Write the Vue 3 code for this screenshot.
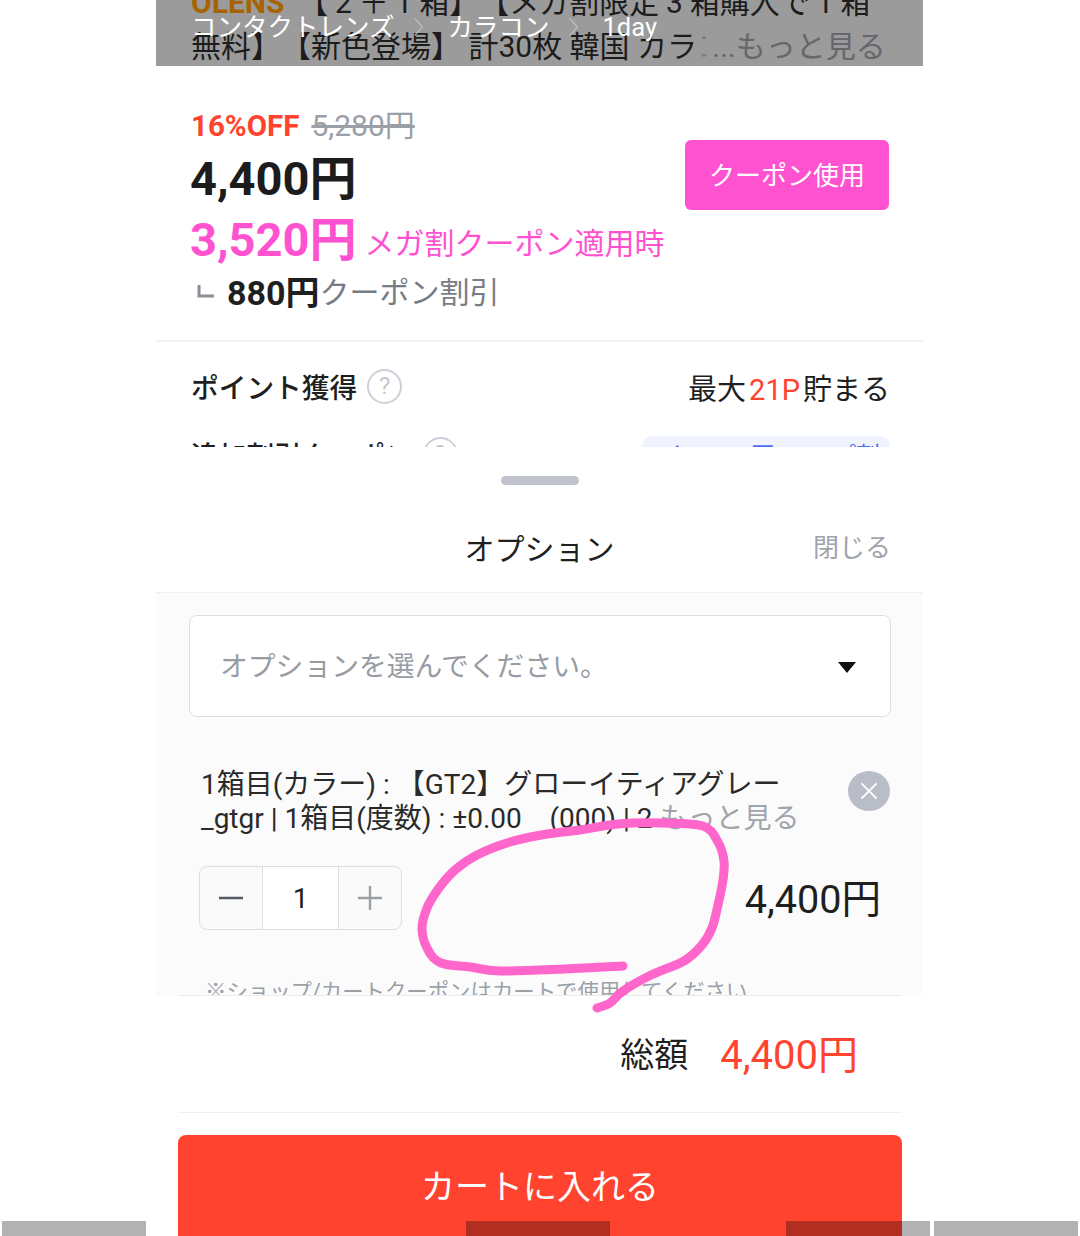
<script setup>
const points = [
  [623, 966], [565, 969], [500, 971], [470, 967], [441, 963], [428, 950], [422, 929], [427, 908],
  [439, 888], [455, 870], [477, 855], [510, 842], [547, 834], [580, 830], [618, 824], [660, 823],
  [703, 826], [718, 842], [724, 861], [723, 880], [718, 905], [712, 928], [702, 945], [684, 961],
  [651, 975], [623, 991], [610, 1003], [597, 1008],
];
function smooth(pts) {
  let d = `M${pts[0][0]} ${pts[0][1]}`;
  for (let i = 0; i < pts.length - 1; i++) {
    const p0 = pts[Math.max(i - 1, 0)];
    const p1 = pts[i];
    const p2 = pts[i + 1];
    const p3 = pts[Math.min(i + 2, pts.length - 1)];
    const c1x = p1[0] + (p2[0] - p0[0]) / 6;
    const c1y = p1[1] + (p2[1] - p0[1]) / 6;
    const c2x = p2[0] - (p3[0] - p1[0]) / 6;
    const c2y = p2[1] - (p3[1] - p1[1]) / 6;
    d += ` C${c1x} ${c1y} ${c2x} ${c2y} ${p2[0]} ${p2[1]}`;
  }
  return d;
}
const strokePath = smooth(points);
const bars = [
  { id: 1, left: "2px" },
  { id: 2, left: "466px" },
  { id: 3, left: "786px" },
  { id: 4, left: "934px" },
];
</script>

<template>
  <div class="screen">
    <main class="phone">
      <header class="hero">
        <div class="title">
          <p class="line first"><b class="brand">OLENS</b><span class="tight">&nbsp;&nbsp;【 2 ＋ 1 箱】【メガ割限定 3 箱購入で 1 箱</span></p>
          <p class="line second"><span>無料】【新色登場】 計30枚 韓国 カラ</span><span class="fade">コ</span><span class="more">...もっと見る</span></p>
        </div>
        <nav class="crumbs">
          <span>コンタクトレンズ</span>
          <svg class="chev" viewBox="0 0 14 26"><path d="M2 2 L12 13 L2 24" /></svg>
          <span>カラコン</span>
          <svg class="chev" viewBox="0 0 14 26"><path d="M2 2 L12 13 L2 24" /></svg>
          <span>1day</span>
        </nav>
      </header>

      <section class="prices">
        <div class="price-col">
          <div class="discount"><b>16%OFF</b><s>5,280円</s></div>
          <div class="big">4,400円</div>
          <div class="mega"><b>3,520円</b><span>メガ割クーポン適用時</span></div>
          <div class="coupon">
            <svg class="corner" viewBox="0 0 18 14"><path d="M2 1 V12 H17" /></svg>
            <b>880円</b><span>クーポン割引</span>
          </div>
        </div>
        <button class="coupon-btn">クーポン使用</button>
      </section>

      <section class="info">
        <div class="info-row">
          <div class="info-label">ポイント獲得<span class="q">?</span></div>
          <div class="info-value">最大<em>21P</em>貯まる</div>
        </div>
        <div class="info-row second-row">
          <div class="info-label">追加割引クーポン<span class="q">?</span></div>
          <div class="pill"><span>く 1,000円 &gt;</span><span>プ割</span></div>
        </div>
      </section>

      <section class="sheet">
        <div class="handle"></div>
        <div class="sheet-head">
          <h2>オプション</h2>
          <span class="close-text">閉じる</span>
        </div>
        <div class="sheet-body">
          <div class="select">
            <span class="placeholder">オプションを選んでください。</span>
            <i class="caret"></i>
          </div>
          <div class="option">
            <div class="option-top">
              <p class="option-text">1箱目(カラー) : 【GT2】グローイティアグレー<br />_gtgr | 1箱目(度数) : ±0.00 &nbsp;&nbsp; (000) | 2 <span class="more-light">もっと見る</span></p>
              <svg class="remove" viewBox="0 0 44 44">
                <ellipse cx="22" cy="21" rx="22" ry="21" fill="#b9bdc7" />
                <path d="M14 13 L30 29 M30 13 L14 29" stroke="#fff" stroke-width="2" />
              </svg>
            </div>
            <div class="option-bottom">
              <div class="stepper">
                <div class="step">
                  <svg viewBox="0 0 24 24"><path d="M0 12 H24" stroke="#555a63" stroke-width="2.4" /></svg>
                </div>
                <div class="count">1</div>
                <div class="step">
                  <svg viewBox="0 0 24 24"><path d="M0 12 H24 M12 0 V24" stroke="#9a9fa8" stroke-width="2.4" /></svg>
                </div>
              </div>
              <div class="option-price">4,400円</div>
            </div>
            <p class="note">※ショップ/カートクーポンはカートで使用してください</p>
          </div>
        </div>
        <div class="total-wrap">
          <div class="total"><span>総額</span><b>4,400円</b></div>
          <button class="cart">カートに入れる</button>
        </div>
      </section>
    </main>

    <svg class="scribble" viewBox="0 0 1080 1236"><path :d="strokePath" /></svg>
    <i v-for="bar in bars" :key="bar.id" class="nav-bar" :style="{ left: bar.left }"></i>
  </div>
</template>

<style>
html, body { margin: 0; background: #fff; }
</style>

<style scoped>
.screen {
  position: relative;
  width: 1080px;
  height: 1236px;
  overflow: hidden;
  background: #fff;
  font-family: Roboto, "Noto Sans CJK JP", sans-serif;
  color: #1f1f1f;
  text-spacing-trim: space-all;
}
.phone { width: 767px; height: 1236px; margin-left: 156px; display: flex; flex-direction: column; }
p, h2 { margin: 0; font-weight: 400; }

.hero { position: relative; height: 66px; flex: none; overflow: hidden; background: #9b9b9b; padding: 0 35px; box-sizing: border-box; }
.title { margin-top: -19px; font-size: 30px; line-height: 44px; color: #1c1c1c; white-space: nowrap; }
.line { height: 44px; }
.tight { word-spacing: -0.6px; }
.brand { color: #a76300; font-weight: 700; }
.fade { display: inline-block; width: 9px; height: 44px; overflow: hidden; vertical-align: top; color: #7d7d7d; }
.more { color: #66676c; margin-left: 6px; }
.crumbs { position: absolute; left: 35px; top: 8px; display: flex; align-items: center; color: #fff; font-size: 25.5px; line-height: 38px; white-space: nowrap; }
.chev { width: 11px; height: 24px; margin: 0 24px 0 18px; fill: none; stroke: #c0c0c0; stroke-width: 1.5; }

.prices { height: 276px; flex: none; box-sizing: border-box; padding: 40px 34px 0 35px; display: flex; justify-content: space-between; align-items: flex-start; border-bottom: 2px solid #f1f1f2; }
.price-col { display: flex; flex-direction: column; white-space: nowrap; }
.discount { height: 40px; display: flex; align-items: center; gap: 12px; }
.discount b { color: #ff432e; font-size: 29.5px; }
.discount s { color: #9a9fa8; font-size: 30px; margin-bottom: 6px; }
.big { height: 64px; line-height: 64px; font-size: 47px; font-weight: 700; color: #1c1c1c; margin: 1px 0 0 -1px; }
.mega { height: 60px; display: flex; align-items: center; gap: 8px; margin: -6px 0 0 -1px; color: #ff52d0; }
.mega b { font-size: 47px; }
.mega span { font-size: 30px; margin-top: 12px; }
.coupon { height: 44px; display: flex; align-items: center; margin-top: 3px; font-size: 30px; color: #777c85; }
.coupon b { color: #1f1f1f; font-size: 34px; }
.corner { width: 18px; height: 14px; margin: 2px 12px 0 6px; fill: none; stroke: #8a8f98; stroke-width: 3; }
.coupon-btn { width: 204px; height: 70px; margin-top: 34px; padding-bottom: 4px; border: 0; border-radius: 6px; background: #ff52d0; color: #fff; font: inherit; font-size: 26px; }

.info { height: 105px; flex: none; overflow: hidden; box-sizing: border-box; padding: 21px 33px 0 35px; }
.info-row { display: flex; justify-content: space-between; align-items: center; height: 46px; }
.second-row { margin-top: 22px; }
.info-label { display: flex; align-items: center; font-size: 27.7px; font-weight: 500; white-space: nowrap; }
.q { width: 31px; height: 31px; margin-left: 10px; border: 2px solid #ccd0d8; border-radius: 50%; color: #c3c7cf; font-size: 24px; font-weight: 400; display: flex; align-items: center; justify-content: center; }
.info-value { font-size: 29px; margin-top: 2px; }
.info-value em { font-style: normal; color: #ff432e; margin: 0 3px; }
.pill { width: 248px; height: 46px; margin-top: 10px; border-radius: 10px; background: #f0f3fe; color: #4d6ff0; font-size: 24px; line-height: 40px; display: flex; justify-content: space-between; padding: 0 10px 0 20px; box-sizing: border-box; }

.sheet { flex: 1; display: flex; flex-direction: column; background: #fff; }
.handle { width: 78px; height: 9px; margin: 29px auto 0; border-radius: 5px; background: #c0c3cc; }
.sheet-head { position: relative; height: 108px; box-sizing: border-box; flex: none; display: flex; align-items: center; justify-content: center; border-bottom: 1px solid #efeff1; }
.sheet-head h2 { font-size: 30px; margin-top: 17px; }
.close-text { position: absolute; right: 32px; top: 43px; font-size: 26px; line-height: 40px; color: #a0a4ab; }
.sheet-body { height: 402px; flex: none; overflow: hidden; background: #fbfbfb; padding: 22px 32px 0 33px; box-sizing: border-box; }
.select { height: 102px; box-sizing: border-box; display: flex; align-items: center; justify-content: space-between; padding: 0 34px 0 30px; border: 1px solid #dcdee3; border-radius: 8px; background: #fff; color: #979ba3; font-size: 27.8px; }
.placeholder { margin-bottom: 4px; }
.caret { width: 0; height: 0; margin-top: 2px; border-left: 9px solid transparent; border-right: 9px solid transparent; border-top: 11px solid #111; }
.option { padding: 49px 0 0 10px; }
.option-top { display: flex; justify-content: space-between; align-items: flex-start; }
.option-text { font-size: 28px; line-height: 33.5px; white-space: nowrap; margin-top: 2px; margin-left: 2px; color: #2a2a2a; }
.more-light { color: #a0a4ab; }
.remove { width: 44px; height: 42px; margin-top: 5px; flex: none; }
.option-bottom { display: flex; justify-content: space-between; align-items: center; margin-top: 31px; }
.stepper { width: 203px; height: 64px; box-sizing: border-box; display: flex; border: 1px solid #dcdee3; border-radius: 8px; background: #fafafa; overflow: hidden; }
.step { width: 62px; display: flex; align-items: center; justify-content: center; }
.step svg { width: 24px; height: 24px; }
.count { width: 76px; background: #fff; border-left: 1px solid #dcdee3; border-right: 1px solid #dcdee3; font-size: 28px; display: flex; align-items: center; justify-content: center; }
.option-price { font-size: 39.6px; margin: 0 10px 6px 0; color: #1f1f1f; }
.note { margin: 46px 0 0 6px; font-size: 21.4px; line-height: 32px; color: #9a9fa8; white-space: nowrap; }
.total-wrap { margin: 0 21px 0 22px; border-top: 1px solid #ececee; }
.total { height: 117px; box-sizing: border-box; display: flex; justify-content: flex-end; align-items: center; gap: 32px; padding: 0 44px 4px 0; border-bottom: 1px solid #efeff1; }
.total span { font-size: 34px; }
.total b { font-size: 40px; font-weight: 400; color: #ff432e; }
.cart { display: block; width: 100%; height: 120px; margin-top: 22px; border: 0; border-radius: 8px; background: #ff432e; color: #fff; font: inherit; font-size: 34px; padding-bottom: 23px; }

.scribble { position: absolute; inset: 0; width: 1080px; height: 1236px; fill: none; stroke: #ff66cc; stroke-width: 9; stroke-linecap: round; stroke-linejoin: round; pointer-events: none; }
.nav-bar { position: absolute; top: 1221px; width: 144px; height: 15px; background: rgba(0, 0, 0, 0.3); }
</style>
